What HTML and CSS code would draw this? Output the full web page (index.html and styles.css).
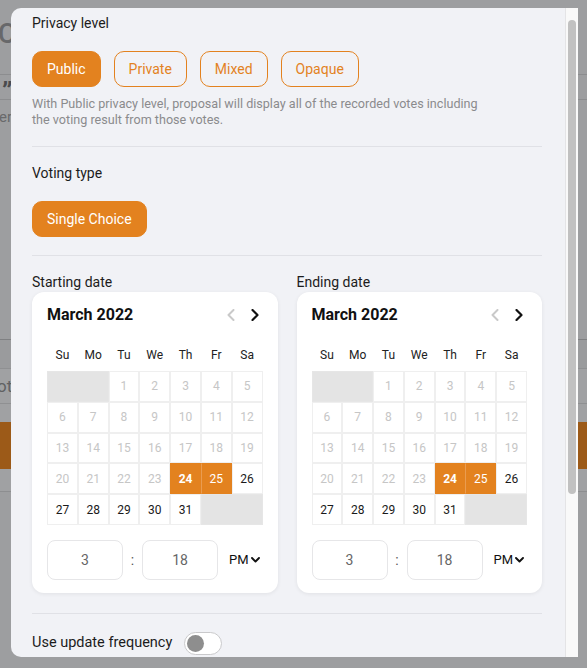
FILE: index.html
```html
<!DOCTYPE html>
<html lang="en">
<head>
<meta charset="utf-8">
<title>Proposal settings</title>
<link rel="stylesheet" href="styles.css">
</head>
<body>
<div class="backdrop">
  <div class="bd-top"><span class="bd-big">C</span></div>
  <div class="bd-quote"><span class="bd-q">”</span></div>
  <div class="bd-text"><span class="bd-er">er</span></div>
  <div class="bd-band"></div>
  <div class="bd-ot"><span class="bd-ottext">ot</span></div>
  <div class="bd-gap"></div>
  <div class="bd-orange"></div>
  <div class="bd-after"></div>
</div>

<div class="modal">
  <div class="modal-body">
    <section class="block">
      <div class="section-title">Privacy level</div>
      <div class="btn-row">
        <button class="btn active">Public</button>
        <button class="btn">Private</button>
        <button class="btn">Mixed</button>
        <button class="btn">Opaque</button>
      </div>
      <p class="helper">With Public privacy level, proposal will display all of the recorded votes including<br>the voting result from those votes.</p>
    </section>
    <div class="divider"></div>
    <section class="block">
      <div class="section-title">Voting type</div>
      <div class="btn-row">
        <button class="btn active">Single Choice</button>
      </div>
    </section>
    <div class="divider"></div>
    <section class="dates">
      <div class="date-col">
        <div class="date-label">Starting date</div>
        <div class="card">
          <div class="cal-head">
            <span class="cal-title">March 2022</span>
            <span class="cal-nav">
              <span class="nav-btn"><svg width="8" height="12" viewBox="0 0 8 12"><polyline points="6.5,1 1.5,6 6.5,11" fill="none" stroke="#c9c9c9" stroke-width="2" stroke-linecap="round" stroke-linejoin="round"/></svg></span>
              <span class="nav-btn"><svg width="8" height="12" viewBox="0 0 8 12"><polyline points="1.5,1 6.5,6 1.5,11" fill="none" stroke="#111" stroke-width="2.2" stroke-linecap="round" stroke-linejoin="round"/></svg></span>
            </span>
          </div>
          <div class="weekdays"><span>Su</span><span>Mo</span><span>Tu</span><span>We</span><span>Th</span><span>Fr</span><span>Sa</span></div>
          <div class="days">
            <span class="d empty span2"></span>
            <span class="d off">1</span><span class="d off">2</span><span class="d off">3</span><span class="d off">4</span><span class="d off">5</span>
            <span class="d off">6</span><span class="d off">7</span><span class="d off">8</span><span class="d off">9</span><span class="d off">10</span><span class="d off">11</span><span class="d off">12</span>
            <span class="d off">13</span><span class="d off">14</span><span class="d off">15</span><span class="d off">16</span><span class="d off">17</span><span class="d off">18</span><span class="d off">19</span>
            <span class="d off">20</span><span class="d off">21</span><span class="d off">22</span><span class="d off">23</span><span class="d sel start">24</span><span class="d sel next">25</span><span class="d">26</span>
            <span class="d">27</span><span class="d">28</span><span class="d">29</span><span class="d">30</span><span class="d">31</span>
            <span class="d empty span2"></span>
          </div>
          <div class="time">
            <span class="tbox">3</span>
            <span class="colon">:</span>
            <span class="tbox">18</span>
            <span class="ampm">PM <svg width="9" height="6" viewBox="0 0 9 6"><polyline points="1,1 4.5,4.5 8,1" fill="none" stroke="#111" stroke-width="1.9" stroke-linecap="round" stroke-linejoin="round"/></svg></span>
          </div>
        </div>
      </div>
      <div class="date-col">
        <div class="date-label">Ending date</div>
        <div class="card">
          <div class="cal-head">
            <span class="cal-title">March 2022</span>
            <span class="cal-nav">
              <span class="nav-btn"><svg width="8" height="12" viewBox="0 0 8 12"><polyline points="6.5,1 1.5,6 6.5,11" fill="none" stroke="#c9c9c9" stroke-width="2" stroke-linecap="round" stroke-linejoin="round"/></svg></span>
              <span class="nav-btn"><svg width="8" height="12" viewBox="0 0 8 12"><polyline points="1.5,1 6.5,6 1.5,11" fill="none" stroke="#111" stroke-width="2.2" stroke-linecap="round" stroke-linejoin="round"/></svg></span>
            </span>
          </div>
          <div class="weekdays"><span>Su</span><span>Mo</span><span>Tu</span><span>We</span><span>Th</span><span>Fr</span><span>Sa</span></div>
          <div class="days">
            <span class="d empty span2"></span>
            <span class="d off">1</span><span class="d off">2</span><span class="d off">3</span><span class="d off">4</span><span class="d off">5</span>
            <span class="d off">6</span><span class="d off">7</span><span class="d off">8</span><span class="d off">9</span><span class="d off">10</span><span class="d off">11</span><span class="d off">12</span>
            <span class="d off">13</span><span class="d off">14</span><span class="d off">15</span><span class="d off">16</span><span class="d off">17</span><span class="d off">18</span><span class="d off">19</span>
            <span class="d off">20</span><span class="d off">21</span><span class="d off">22</span><span class="d off">23</span><span class="d sel start">24</span><span class="d sel next">25</span><span class="d">26</span>
            <span class="d">27</span><span class="d">28</span><span class="d">29</span><span class="d">30</span><span class="d">31</span>
            <span class="d empty span2"></span>
          </div>
          <div class="time">
            <span class="tbox">3</span>
            <span class="colon">:</span>
            <span class="tbox">18</span>
            <span class="ampm">PM <svg width="9" height="6" viewBox="0 0 9 6"><polyline points="1,1 4.5,4.5 8,1" fill="none" stroke="#111" stroke-width="1.9" stroke-linecap="round" stroke-linejoin="round"/></svg></span>
          </div>
        </div>
      </div>
    </section>
    <div class="divider divider-last"></div>
    <div class="toggle-row">
      <span class="toggle-label">Use update frequency</span>
      <span class="toggle"><span class="knob"></span></span>
    </div>
  </div>
  <div class="scrollbar"><div class="thumb"></div></div>
</div>
</body>
</html>
```
FILE: styles.css
```css
* { box-sizing: border-box; }
html, body {
  margin: 0;
  padding: 0;
}
body {
  width: 587px;
  height: 668px;
  overflow: hidden;
  position: relative;
  background: #9d9ea0;
  font-family: Roboto, "Liberation Sans", Arial, sans-serif;
  color: #1c1c1c;
}

/* ---------- dimmed page behind the modal ---------- */
.backdrop {
  display: flex;
  flex-direction: column;
  width: 100%;
}
.bd-top {
  height: 74px;
  padding-top: 19px;
}
.bd-big {
  display: block;
  margin-left: -2px;
  font-size: 27px;
  line-height: 30px;
  font-weight: 500;
  color: #67686a;
}
.bd-quote {
  height: 26px;
  border-top: 1px solid #8c8d8f;
  border-bottom: 1px solid #8c8d8f;
  padding-left: 2px;
}
.bd-q {
  display: block;
  font-size: 26px;
  line-height: 26px;
  font-weight: 700;
  color: #4a4b4d;
  margin-top: 3px;
}
.bd-text {
  height: 239px;
  padding-top: 8px;
}
.bd-er {
  display: block;
  margin-left: -1px;
  font-size: 15px;
  line-height: 18px;
  color: #68696b;
}
.bd-band {
  height: 30px;
  border-top: 1px solid #7f8082;
  border-bottom: 1px solid #8f9092;
  background: #9a9b9d;
}
.bd-ot {
  height: 35px;
  border-bottom: 1px solid #8f9092;
  background: #a0a1a3;
  padding-top: 7px;
}
.bd-ottext {
  display: block;
  margin-left: -3px;
  font-size: 17px;
  line-height: 20px;
  color: #606163;
}
.bd-gap {
  height: 18px;
  background: #a0a1a3;
}
.bd-orange {
  height: 47px;
  background: #9c5a18;
}
.bd-after {
  height: 23px;
  background: #a0a1a3;
  border-bottom: 1px solid #8d8e90;
}

/* ---------- modal ---------- */
.modal {
  position: absolute;
  top: 8px;
  left: 11px;
  width: 567px;
  height: 649px;
  display: flex;
  background: #f1f2f6;
  border-radius: 10px 0 0 10px;
  overflow: hidden;
}
.modal-body {
  flex: 1;
  min-width: 0;
  padding: 5px 23px 0 21px;
  overflow: hidden;
}
.scrollbar {
  width: 13px;
  flex: none;
  background: #f9f9f9;
  border-left: 1px solid #e4e4e6;
  padding: 12px 2px 0 2px;
}
.thumb {
  width: 8px;
  height: 474px;
  border-radius: 4px;
  background: #c1c1c1;
}

.section-title,
.date-label,
.toggle-label {
  font-size: 14px;
  line-height: 20px;
  color: #1c1c1c;
}
.toggle-label { font-size: 14.5px; }
.section-title { margin-bottom: 18px; }

.btn-row {
  display: flex;
  gap: 13px;
}
.btn {
  height: 36px;
  padding: 0 14px;
  border: 1px solid #e3821f;
  border-radius: 10px;
  background: transparent;
  color: #e3821f;
  font-family: inherit;
  font-size: 14px;
  line-height: 20px;
}
.btn.active {
  background: #e3821f;
  color: #ffffff;
}
.helper {
  margin: 9px 0 0;
  font-size: 12.6px;
  line-height: 16px;
  color: #8b8b8d;
}
.divider {
  height: 1px;
  background: #e0e1e6;
  margin: 18px 0 16px;
}
.divider-last { margin: 20px 0 18px; }

/* ---------- dates ---------- */
.dates {
  display: grid;
  grid-template-columns: 1fr 1fr;
  gap: 19px;
}
.card {
  background: #ffffff;
  border-radius: 12px;
  box-shadow: 0 1px 4px rgba(0, 0, 0, 0.07);
  padding: 12px 15px 13px;
}
.cal-head {
  height: 22px;
  display: flex;
  align-items: center;
  justify-content: space-between;
}
.cal-title {
  font-size: 16px;
  line-height: 22px;
  font-weight: 700;
  color: #111111;
}
.cal-nav {
  display: flex;
  gap: 8px;
}
.nav-btn {
  width: 16px;
  height: 20px;
  display: flex;
  align-items: center;
  justify-content: center;
}
.weekdays {
  margin-top: 21px;
  display: grid;
  grid-template-columns: repeat(7, 1fr);
  font-size: 12px;
  line-height: 16px;
  text-align: center;
  color: #222222;
}
.days {
  margin-top: 8px;
  display: grid;
  grid-template-columns: repeat(7, 1fr);
  grid-auto-rows: 30.8px;
}
.d {
  display: flex;
  align-items: center;
  justify-content: center;
  border: 1px solid #efefef;
  font-size: 12px;
  color: #1a1a1a;
}
.d.off { color: #c6c6c6; }
.d.empty {
  background: #e4e4e4;
  border-color: #e6e6e6;
}
.d.span2 { grid-column: span 2; }
.d.sel {
  background: #e3821f;
  border-color: #e3821f;
  color: #ffffff;
}
.d.start { font-weight: 700; }
.d.next { border-left-color: #ea9c50; }

.time {
  margin-top: 15px;
  height: 40px;
  display: flex;
  align-items: center;
}
.tbox {
  width: 76px;
  height: 40px;
  border: 1px solid #e6e6e8;
  border-radius: 8px;
  display: flex;
  align-items: center;
  justify-content: center;
  font-size: 14px;
  color: #666666;
}
.colon {
  width: 19px;
  text-align: center;
  font-size: 14px;
  color: #555555;
}
.ampm {
  margin-left: 11px;
  display: flex;
  align-items: center;
  gap: 2px;
  font-size: 13px;
  color: #111111;
}

/* ---------- toggle ---------- */
.toggle-row {
  display: flex;
  align-items: center;
  gap: 12px;
}
.toggle {
  width: 38px;
  height: 23px;
  border: 1px solid #c9c9cb;
  border-radius: 12px;
  background: #ffffff;
  display: flex;
  align-items: center;
  padding-left: 2px;
}
.knob {
  width: 17px;
  height: 17px;
  border-radius: 50%;
  background: #8e8e8e;
}
```
